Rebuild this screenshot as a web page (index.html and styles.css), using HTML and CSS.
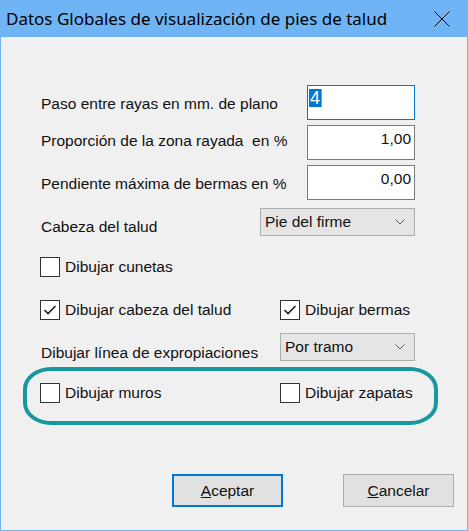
FILE: index.html
```html
<!DOCTYPE html>
<html lang="es">
<head>
    <meta charset="UTF-8">
    <meta name="viewport" content="width=device-width, initial-scale=1.0">
    <title>Datos Globales de visualización de pies de talud</title>
    <link rel="stylesheet" href="styles.css">
</head>
<body>
    <div class="dialog">
        <div class="titlebar">
            <span class="title">Datos Globales de visualización de pies de talud</span>
            <svg class="close" width="16" height="16" viewBox="0 0 16 16">
                <path d="M0.5 0.5 L15.5 15.5 M15.5 0.5 L0.5 15.5" stroke="#000" stroke-width="1" fill="none"/>
            </svg>
        </div>

        <div class="content">
            <div class="row">
                <span class="label lbl-10">Paso entre rayas en mm. de plano</span>
                <div class="edit focused"><span class="sel">4</span><span class="caret"></span></div>
            </div>
            <div class="row gap-5">
                <span class="label lbl-7">Proporción de la zona rayada&nbsp; en %</span>
                <div class="edit">1,00</div>
            </div>
            <div class="row gap-5">
                <span class="label lbl-10">Pendiente máxima de bermas en %</span>
                <div class="edit">0,00</div>
            </div>
            <div class="row gap-8">
                <span class="label lbl-10">Cabeza del talud</span>
                <div class="combo wide">
                    <span>Pie del firme</span>
                    <svg class="chevron" width="10" height="6" viewBox="0 0 10 6">
                        <polyline points="0.5,0.5 5,5 9.5,0.5" stroke="#606060" stroke-width="1" fill="none"/>
                    </svg>
                </div>
            </div>
            <div class="row gap-21">
                <label class="check"><span class="box"></span>Dibujar cunetas</label>
            </div>
            <div class="pair gap-23">
                <label class="check">
                    <span class="box">
                        <svg width="18" height="18" viewBox="0 0 18 18"><polyline points="3.5,9 7,12.5 14.5,5" stroke="#222" stroke-width="1.6" fill="none"/></svg>
                    </span>Dibujar cabeza del talud
                </label>
                <label class="check">
                    <span class="box">
                        <svg width="18" height="18" viewBox="0 0 18 18"><polyline points="3.5,9 7,12.5 14.5,5" stroke="#222" stroke-width="1.6" fill="none"/></svg>
                    </span>Dibujar bermas
                </label>
            </div>
            <div class="row gap-13">
                <span class="label lbl-11">Dibujar línea de expropiaciones</span>
                <div class="combo">
                    <span>Por tramo</span>
                    <svg class="chevron" width="10" height="6" viewBox="0 0 10 6">
                        <polyline points="0.5,0.5 5,5 9.5,0.5" stroke="#606060" stroke-width="1" fill="none"/>
                    </svg>
                </div>
            </div>
            <div class="pair gap-21">
                <label class="check"><span class="box"></span>Dibujar muros</label>
                <label class="check"><span class="box"></span>Dibujar zapatas</label>
            </div>
        </div>

        <div class="buttons">
            <button class="btn default"><u>A</u>ceptar</button>
            <button class="btn"><u>C</u>ancelar</button>
        </div>

        <div class="highlight"></div>
    </div>
</body>
</html>
```

FILE: styles.css
```css
body {
    margin: 0;
    padding: 0;
    background-color: #f0f0f0;
}

.dialog {
    position: relative;
    width: 468px;
    height: 531px;
    box-sizing: border-box;
    border: 1px solid #6fb4f4;
    border-top: none;
    background-color: #f0f0f0;
    font-family: "Liberation Sans", Arial, sans-serif;
    font-size: 15.5px;
    color: #111;
}

.titlebar {
    height: 37px;
    display: flex;
    align-items: center;
    justify-content: space-between;
    padding: 0 17px 0 5px;
    background-color: #6fb4f4;
}

.title {
    font-family: "Noto Sans", "Open Sans", sans-serif;
    font-size: 17px;
    color: #000;
}

.close {
    display: block;
}

.content {
    padding: 48px 52px 0 39px;
}

.row {
    display: flex;
    justify-content: space-between;
    align-items: flex-start;
}

.pair {
    display: grid;
    grid-template-columns: 240px 1fr;
}

.gap-5 { margin-top: 5px; }
.gap-8 { margin-top: 8px; }
.gap-13 { margin-top: 13px; }
.gap-21 { margin-top: 21px; }
.gap-23 { margin-top: 23px; }

.label {
    display: block;
    line-height: 18px;
    padding-left: 1px;
    white-space: nowrap;
}

.lbl-7 { margin-top: 7px; }
.lbl-10 { margin-top: 10px; }
.lbl-11 { margin-top: 11px; }

.edit {
    width: 108px;
    height: 35px;
    box-sizing: border-box;
    border: 1px solid #7a7a7a;
    background-color: #fff;
    padding: 4px 3px 0;
    line-height: 18px;
    text-align: right;
}

.edit.focused {
    display: flex;
    align-items: flex-start;
    border-color: #0078d7;
    padding: 3px 0 0 1px;
}

.sel {
    display: block;
    background-color: #0078d7;
    color: #fff;
    font-size: 18px;
    line-height: 18px;
    padding: 0 1px;
}

.caret {
    display: block;
    width: 1px;
    height: 18px;
    background-color: #e08a30;
}

.combo {
    width: 135px;
    height: 28px;
    box-sizing: border-box;
    display: flex;
    align-items: center;
    justify-content: space-between;
    border: 1px solid #adadad;
    background-color: #e5e5e5;
    padding: 0 9px 0 4px;
    line-height: 18px;
}

.combo.wide {
    width: 155px;
}

.chevron {
    display: block;
}

.check {
    display: flex;
    align-items: center;
    gap: 5px;
    height: 20px;
    line-height: 18px;
    white-space: nowrap;
}

.box {
    width: 20px;
    height: 20px;
    box-sizing: border-box;
    border: 1px solid #333;
    background-color: #fff;
    flex: none;
}

.box svg {
    display: block;
}

.buttons {
    display: flex;
    justify-content: flex-end;
    gap: 60px;
    margin-top: 71px;
    padding-right: 13px;
}

.btn {
    width: 111px;
    height: 33px;
    box-sizing: border-box;
    border: 1px solid #adadad;
    background-color: #e1e1e1;
    font-family: "Liberation Sans", Arial, sans-serif;
    font-size: 15.5px;
    color: #111;
    padding: 0;
    border-radius: 0;
}

.btn.default {
    border: 2px solid #0078d7;
}

.highlight {
    position: absolute;
    left: 22px;
    top: 367px;
    width: 415px;
    height: 58px;
    box-sizing: border-box;
    border: 4px solid #17989e;
    border-radius: 28px / 22px;
}
```
